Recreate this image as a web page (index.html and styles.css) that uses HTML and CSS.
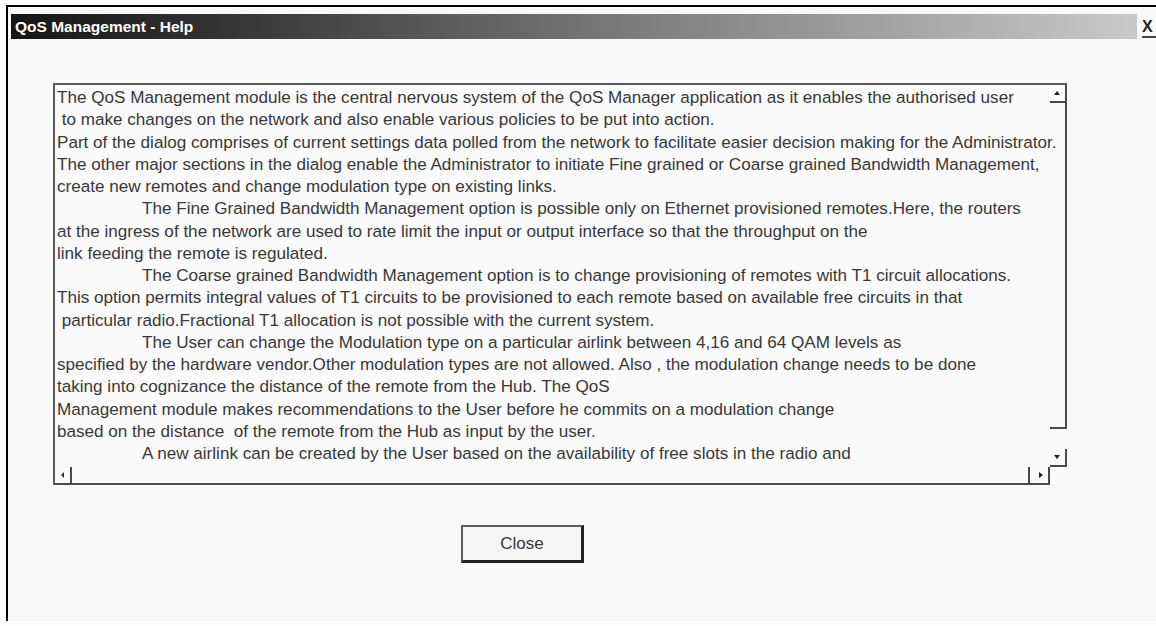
FILE: index.html
```html
<!DOCTYPE html>
<html lang="en">
<head>
<meta charset="utf-8">
<title>QoS Management - Help</title>
<link rel="stylesheet" href="styles.css">
</head>
<body>
<div class="screen">
  <div class="window">
    <div class="titlebar">
      <div class="caption">QoS Management - Help</div>
      <div class="close-x">X</div>
    </div>
    <div class="client">
      <div class="textbox">
        <div class="text">
          <div class="line">The QoS Management module is the central nervous system of the QoS Manager application as it enables the authorised user</div>
          <div class="line"> to make changes on the network and also enable various policies to be put into action.</div>
          <div class="line">Part of the dialog comprises of current settings data polled from the network to facilitate easier decision making for the Administrator.</div>
          <div class="line">The other major sections in the dialog enable the Administrator to initiate Fine grained or Coarse grained Bandwidth Management,</div>
          <div class="line">create new remotes and change modulation type on existing links.</div>
          <div class="line indent">The Fine Grained Bandwidth Management option is possible only on Ethernet provisioned remotes.Here, the routers</div>
          <div class="line">at the ingress of the network are used to rate limit the input or output interface so that the throughput on the</div>
          <div class="line">link feeding the remote is regulated.</div>
          <div class="line indent">The Coarse grained Bandwidth Management option is to change provisioning of remotes with T1 circuit allocations.</div>
          <div class="line">This option permits integral values of T1 circuits to be provisioned to each remote based on available free circuits in that</div>
          <div class="line"> particular radio.Fractional T1 allocation is not possible with the current system.</div>
          <div class="line indent">The User can change the Modulation type on a particular airlink between 4,16 and 64 QAM levels as</div>
          <div class="line">specified by the hardware vendor.Other modulation types are not allowed. Also , the modulation change needs to be done</div>
          <div class="line">taking into cognizance the distance of the remote from the Hub. The QoS</div>
          <div class="line">Management module makes recommendations to the User before he commits on a modulation change</div>
          <div class="line">based on the distance  of the remote from the Hub as input by the user.</div>
          <div class="line indent">A new airlink can be created by the User based on the availability of free slots in the radio and</div>
        </div>
        <div class="vscroll">
          <div class="vbtn vbtn-up"><span class="arrow arrow-up"></span></div>
          <div class="vthumb"></div>
          <div class="vtrack"></div>
          <div class="vbtn vbtn-down"><span class="arrow arrow-down"></span></div>
        </div>
        <div class="hscroll">
          <div class="hbtn hbtn-left"><span class="arrow arrow-left"></span></div>
          <div class="hthumb"></div>
          <div class="htrack"></div>
          <div class="hbtn hbtn-right"><span class="arrow arrow-right"></span></div>
        </div>
        <div class="grip"></div>
      </div>
      <div class="actions">
        <button class="btn-close" type="button">Close</button>
      </div>
    </div>
  </div>
</div>
</body>
</html>
```
FILE: styles.css
```css
html, body {
  margin: 0;
  padding: 0;
  width: 1156px;
  height: 626px;
  overflow: hidden;
  background: #fdfdfd;
}

.screen {
  padding: 5px 0 0 6px;
  height: 621px;
  box-sizing: border-box;
}

.window {
  height: 100%;
  box-sizing: border-box;
  border-top: 2px solid #000;
  border-left: 2px solid #000;
  background: #f8f8f8;
  padding: 7px 0 0 3px;
  font-family: "Liberation Sans", Arial, sans-serif;
  overflow: hidden;
}

/* caption bar: dark-to-light gradient with the close glyph at the far end */
.titlebar {
  display: flex;
  height: 25px;
}

.caption {
  flex: 0 0 1126px;
  background: linear-gradient(to right, #151515 0%, #333 18%, #7c7c7c 55%, #c9c9c9 100%);
  color: #fff;
  font-weight: bold;
  font-size: 15.5px;
  line-height: 25px;
  padding-left: 4px;
  box-sizing: border-box;
}

.close-x {
  flex: 0 0 20px;
  margin-left: 5px;
  height: 22px;
  font-weight: bold;
  font-size: 16px;
  line-height: 25px;
  color: #222;
  border-bottom: 2px solid #444;
}

.client {
  padding: 44px 0 0 42px;
}

/* multi-line read-only text box with both scrollbars */
.textbox {
  display: grid;
  grid-template-columns: 995px 17px;
  grid-template-rows: 382px 18px;
  width: 1014px;
  box-sizing: border-box;
  border-top: 2px solid #5a5a5a;
  border-left: 2px solid #5a5a5a;
  background: #fafafa;
}

.text {
  grid-column: 1;
  grid-row: 1;
  padding: 2px 0 0 2px;
  color: #383838;
  font-size: 17.1px;
  line-height: 22.25px;
  overflow: visible;
  min-width: 0;
}

.line {
  white-space: pre;
}

.indent {
  padding-left: 85px;
}

.vscroll {
  grid-column: 2;
  grid-row: 1;
  display: flex;
  flex-direction: column;
}

.vbtn {
  height: 16px;
  border-right: 2px solid #4a4a4a;
  border-bottom: 2px solid #4a4a4a;
  display: flex;
  align-items: center;
  justify-content: center;
  padding-right: 2px;
}

.vthumb {
  flex: 1;
  border-right: 2px solid #4a4a4a;
  border-bottom: 2px solid #4a4a4a;
}

.vtrack {
  height: 20px;
}

.hscroll {
  grid-column: 1;
  grid-row: 2;
  display: flex;
}

.hbtn {
  width: 15px;
  border-right: 2px solid #4a4a4a;
  border-bottom: 2px solid #4a4a4a;
  display: flex;
  align-items: center;
  justify-content: center;
}

.hthumb {
  flex: 1;
  border-right: 2px solid #4a4a4a;
  border-bottom: 2px solid #4a4a4a;
}

.htrack {
  width: 3px;
  border-bottom: 2px solid #4a4a4a;
}

.grip {
  grid-column: 2;
  grid-row: 2;
}

.arrow {
  width: 0;
  height: 0;
  border-style: solid;
}

.arrow-up {
  border-width: 0 3px 4px 3px;
  border-color: transparent transparent #222 transparent;
}

.arrow-down {
  border-width: 4px 3px 0 3px;
  border-color: #222 transparent transparent transparent;
}

.arrow-left {
  border-width: 3px 3px 3px 0;
  border-color: transparent #333 transparent transparent;
}

.arrow-right {
  border-width: 3px 0 3px 4px;
  border-color: transparent transparent transparent #222;
}

.actions {
  padding: 40px 0 0 408px;
}

.btn-close {
  width: 123px;
  height: 38px;
  box-sizing: border-box;
  background: #f6f6f6;
  border-top: 2px solid #5c5c5c;
  border-left: 2px solid #5c5c5c;
  border-right: 3px solid #222;
  border-bottom: 3px solid #222;
  font-family: "Liberation Sans", Arial, sans-serif;
  font-size: 17px;
  color: #383838;
  padding: 0;
}
```
